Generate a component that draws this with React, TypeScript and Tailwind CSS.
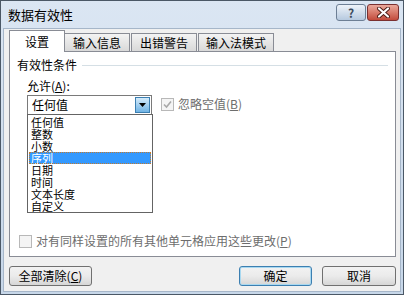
import React from 'react';

const font = { fontFamily: '"Noto Sans CJK SC", "Noto Sans", sans-serif' };

const items = ['任何值', '整数', '小数', '序列', '日期', '时间', '文本长度', '自定义'];

const Tab = ({ label, active, w }: { label: string; active?: boolean; w: string }) =>
  active ? (
    <div className={`relative z-10 -mb-px flex h-[22px] items-center justify-center border border-b-0 border-[#898c95] bg-white text-[12px] text-black ${w}`}>
      {label}
    </div>
  ) : (
    <div className={`-ml-px flex h-[18px] items-center justify-center border border-b-0 border-[#898c95] bg-gradient-to-b from-[#f3f3f3] to-[#d9d9d9] text-[12px] text-black ${w}`}>
      {label}
    </div>
  );

const Button = ({ children, w, primary }: { children: React.ReactNode; w: string; primary?: boolean }) => (
  <div
    className={`flex h-[20px] items-center justify-center rounded-[3px] border bg-gradient-to-b from-[#f2f2f2] via-[#ebebeb] to-[#d6d6d6] text-[12px] text-black ${w} ${
      primary ? 'border-[#3c7fb1] shadow-[inset_0_0_0_1px_#a8d8f0]' : 'border-[#707070]'
    }`}
  >
    {children}
  </div>
);

const Check = () => (
  <div className="flex h-[13px] w-[13px] items-center justify-center border border-[#b8b8b8] bg-[#f4f4f4]">
    <svg width="9" height="9" viewBox="0 0 9 9">
      <path d="M1 4.5 L3.5 7 L8 1.5" stroke="#a8a8a8" strokeWidth="1.6" fill="none" />
    </svg>
  </div>
);

export default function App() {
  return (
    <div
      className="flex h-[295px] w-[404px] flex-col border border-[#4b5866] bg-gradient-to-b from-[#dbe6f3] to-[#c7d7e9]"
      style={font}
    >
      {/* title bar */}
      <div className="flex h-[27px] shrink-0 items-center pl-[7px] pr-[4px]">
        <span className="flex-1 text-[13px] text-black">数据有效性</span>
        <div className="flex items-start gap-[1px] self-start pt-[3px]">
          <div className="flex h-[17px] w-[30px] items-center justify-center rounded-[3px] border border-[#6d7f95] bg-gradient-to-b from-[#eef3f9] to-[#b6c9df] text-[12px] font-bold text-[#3a4a5c]">
            ?
          </div>
          <div className="flex h-[17px] w-[32px] items-center justify-center rounded-[3px] border border-[#7a3030] bg-gradient-to-b from-[#eaa89b] to-[#c24a3c]">
            <svg width="13" height="11" viewBox="0 0 13 11">
              <path d="M2 1.5 L11 9.5 M11 1.5 L2 9.5" stroke="#4a1a14" strokeWidth="4" strokeLinecap="round" />
              <path d="M2 1.5 L11 9.5 M11 1.5 L2 9.5" stroke="#ffffff" strokeWidth="2.2" strokeLinecap="round" />
            </svg>
          </div>
        </div>
      </div>

      {/* body */}
      <div className="mx-[2px] mb-[2px] flex flex-1 flex-col border border-[#a6b6c9] bg-[#f0f0f0] pl-[5px] pr-[4px] pt-[1px]">
        <div className="flex items-end">
          <Tab label="设置" active w="w-[56px]" />
          <Tab label="输入信息" w="w-[66px]" />
          <div className="w-[2px]" />
          <Tab label="出错警告" w="w-[66px]" />
          <div className="w-[2px]" />
          <Tab label="输入法模式" w="w-[76px]" />
        </div>

        <div className="relative flex h-[206px] flex-col border border-[#898c95] bg-white pl-[7px] pr-[7px] pt-[6px]">
          <div className="flex items-center gap-[5px]">
            <span className="text-[12px] leading-[14px] text-black">有效性条件</span>
            <div className="h-px flex-1 bg-[#d5dfe5]" />
          </div>
          <div className="mt-[7px] pl-[10px] text-[12px] leading-[14px] text-black">
            允许(<span className="underline">A</span>):
          </div>
          <div className="mt-[2px] flex items-start gap-[9px] pl-[10px]">
            <div className="relative">
              <div className="flex h-[20px] w-[125px] items-center border border-[#7a7a7a] bg-white">
                <span className="flex-1 pl-[4px] text-[12px] text-black">任何值</span>
                <div className="mr-px flex h-[16px] w-[15px] items-center justify-center border border-[#3c7fb1] bg-gradient-to-b from-[#d4ebfa] to-[#6fb3e4]">
                  <svg width="7" height="4" viewBox="0 0 7 4">
                    <path d="M0 0 H7 L3.5 4 Z" fill="#000" />
                  </svg>
                </div>
              </div>
              <div className="absolute left-0 top-[19px] z-20 flex w-[126px] flex-col border border-[#646464] bg-white pt-px">
                {items.map((it) => (
                  <div
                    key={it}
                    className={`mx-px h-[12px] px-[2px] text-[11px] leading-[12px] ${
                      it === '序列'
                        ? 'bg-[#3399ff] text-white outline-1 -outline-offset-1 outline-dotted outline-[#c07a30]'
                        : 'text-black'
                    }`}
                  >
                    {it}
                  </div>
                ))}
              </div>
            </div>
            <div className="mt-[2px] flex items-center gap-[4px]">
              <Check />
              <span className="text-[12px] leading-[14px] text-[#6d6d6d]">
                忽略空值(<span className="underline">B</span>)
              </span>
            </div>
          </div>
          <div className="flex-1" />
          <div className="mb-[8px] flex items-center gap-[4px] pl-[2px]">
            <div className="h-[13px] w-[13px] border border-[#b8b8b8] bg-[#f4f4f4]" />
            <span className="text-[12px] leading-[14px] text-[#6d6d6d]">
              对有同样设置的所有其他单元格应用这些更改(<span className="underline">P</span>)
            </span>
          </div>
        </div>

        <div className="mt-[9px] flex items-center">
          <Button w="w-[83px]">
            全部清除(<span className="underline">C</span>)
          </Button>
          <div className="flex-1" />
          <Button w="w-[73px]" primary>
            确定
          </Button>
          <div className="w-[10px]" />
          <Button w="w-[74px]">取消</Button>
        </div>
      </div>
    </div>
  );
}
